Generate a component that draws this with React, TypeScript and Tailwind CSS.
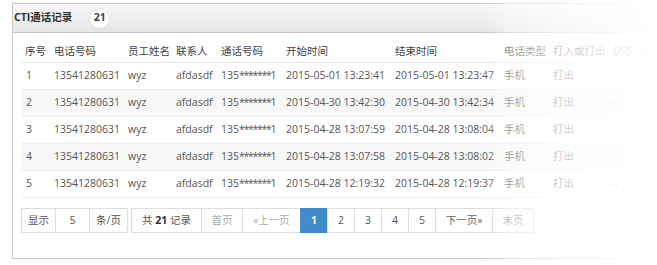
const rows = [
  { no: 1, start: '2015-05-01 13:23:41', end: '2015-05-01 13:23:47' },
  { no: 2, start: '2015-04-30 13:42:30', end: '2015-04-30 13:42:34' },
  { no: 3, start: '2015-04-28 13:07:59', end: '2015-04-28 13:08:04' },
  { no: 4, start: '2015-04-28 13:07:58', end: '2015-04-28 13:08:02' },
  { no: 5, start: '2015-04-28 12:19:32', end: '2015-04-28 12:19:37' },
];

const headers = ['序号', '电话号码', '员工姓名', '联系人', '通话号码', '开始时间', '结束时间', '电话类型', '打入或打出', '状态', '语音'];

const rowGrid = 'grid grid-cols-[29px_74px_48px_45px_65px_109px_109px_49px_59px_28px_40px] items-center pl-[4px]';

function PageCell({ children, className = '' }: { children: React.ReactNode; className?: string }) {
  return (
    <span className={`-ml-px first:ml-0 flex h-[25px] items-center justify-center border ${className}`}>
      {children}
    </span>
  );
}

export default function App() {
  return (
    <div className="relative h-[265px] w-[657px] overflow-hidden bg-white pl-[12px] pt-[3px] font-['Open_Sans','Noto_Sans_CJK_SC',sans-serif] text-[10.5px] text-[#555]">
      <div className="w-[640px] overflow-hidden border border-[#c8c8c8] bg-white">
        <div className="flex h-[29px] items-center border-b border-[#c4c4c4] bg-gradient-to-b from-[#f8f8f8] to-[#e6e6e6] pl-[1px]">
          <span className="font-bold text-[#333]">CTI通话记录</span>
          <span className="ml-[17px] flex h-[21px] w-[21px] items-center justify-center rounded-full border border-[#e0e0e0] bg-white font-bold text-[#444]">
            21
          </span>
        </div>
        <div className="pl-[8px] pt-[8px] pb-[25px]">
          <div className="w-[660px] whitespace-nowrap">
            <div className={`${rowGrid} h-[22px] border-b border-[#e6e6e6] text-[#444]`}>
              {headers.map((h) => (
                <span key={h} className="overflow-hidden">{h}</span>
              ))}
            </div>
            {rows.map((r) => (
              <div key={r.no} className={`${rowGrid} h-[27px] border-b border-[#eee] ${r.no % 2 === 0 ? 'bg-[#f8f8f8]' : 'bg-white'}`}>
                <span className="pl-[1px]">{r.no}</span>
                <span>13541280631</span>
                <span>wyz</span>
                <span>afdasdf</span>
                <span>
                  135<span className="tracking-[-1.3px]">*******</span>1
                </span>
                <span>{r.start}</span>
                <span>{r.end}</span>
                <span>手机</span>
                <span>打出</span>
                <span>--</span>
                <span>--</span>
              </div>
            ))}
          </div>

          <div className="mt-[10px] flex items-center">
            <div className="flex">
              <PageCell className="w-[35px] border-[#ddd] bg-white">显示</PageCell>
              <PageCell className="w-[35px] border-[#ddd] bg-white">5</PageCell>
              <PageCell className="w-[39px] border-[#ddd] bg-white">条/页</PageCell>
            </div>
            <div className="ml-[3px] flex">
              <PageCell className="w-[71px] border-[#ddd] bg-white">
                共&nbsp;<b className="text-[#333]">21</b>&nbsp;记录
              </PageCell>
              <PageCell className="w-[42px] border-[#ddd] bg-white text-[#aaa]">首页</PageCell>
              <PageCell className="w-[59px] border-[#ddd] bg-white text-[#aaa]">«上一页</PageCell>
              <PageCell className="w-[28px] border-[#428bca] bg-[#428bca] font-bold text-white">1</PageCell>
              <PageCell className="w-[28px] border-[#ddd] bg-white">2</PageCell>
              <PageCell className="w-[28px] border-[#ddd] bg-white">3</PageCell>
              <PageCell className="w-[28px] border-[#ddd] bg-white">4</PageCell>
              <PageCell className="w-[28px] border-[#ddd] bg-white">5</PageCell>
              <PageCell className="w-[58px] border-[#ddd] bg-white text-[#666]">下一页»</PageCell>
              <PageCell className="w-[42px] border-[#ddd] bg-white text-[#999]">末页</PageCell>
            </div>
          </div>
        </div>
      </div>
      <div className="pointer-events-none absolute inset-y-0 right-0 w-[177px] bg-[linear-gradient(to_right,rgba(255,255,255,0)_0px,rgba(255,255,255,0.45)_30px,rgba(255,255,255,0.7)_80px,rgba(255,255,255,0.9)_140px,#fff_177px)]" />
    </div>
  );
}
